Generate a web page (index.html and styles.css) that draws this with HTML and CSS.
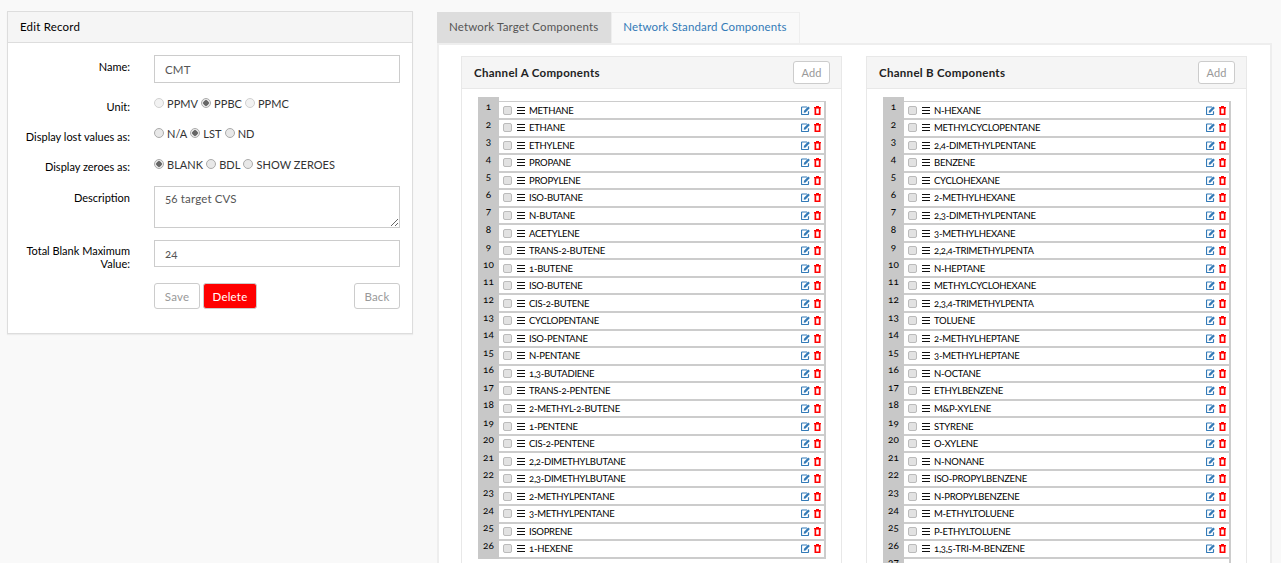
FILE: index.html
```html
<!DOCTYPE html>
<html lang="en">
<head>
  <meta charset="UTF-8">
  <title>Edit Record</title>
  <link rel="stylesheet" href="styles.css">
</head>
<body>
  <svg class="sprite">
    <symbol id="i-edit" viewBox="0 0 9 9">
      <path d="M6 1H1.2C.8 1 .5 1.3.5 1.7v6.1c0 .4.3.7.7.7h5.6c.4 0 .7-.3.7-.7V5.2" fill="none" stroke="#337ab7" stroke-width="1.2"/>
      <path d="M3 4.8 7.2.5 8.9 2 4.6 6.4 2.7 6.8z" fill="#337ab7"/>
    </symbol>
    <symbol id="i-del" viewBox="0 0 7 9">
      <path d="M2 1V0h3v1h2v1.2h-.5V9H.5V2.2H0V1z" fill="#f00"/>
      <path d="M2.2 2.6h2.6v4.9H2.2z" fill="#fff"/>
    </symbol>
  </svg>

  <div class="left-col">
    <div class="panel">
      <div class="panel-heading">Edit Record</div>
      <div class="panel-body">
        <div class="form-row row-name">
          <label class="form-label">Name:</label>
          <input class="form-input input-name" type="text" value="CMT">
        </div>
        <div class="form-row row-radio row-unit">
          <label class="form-label">Unit:</label>
          <div class="radio-group">
            <input type="radio" class="radio faded" disabled><span>PPMV</span>
            <input type="radio" class="radio" checked disabled><span>PPBC</span>
            <input type="radio" class="radio faded" disabled><span>PPMC</span>
          </div>
        </div>
        <div class="form-row row-radio row-lost">
          <label class="form-label">Display lost values as:</label>
          <div class="radio-group">
            <input type="radio" class="radio" disabled><span>N/A</span>
            <input type="radio" class="radio" checked disabled><span>LST</span>
            <input type="radio" class="radio" disabled><span>ND</span>
          </div>
        </div>
        <div class="form-row row-radio row-zero">
          <label class="form-label">Display zeroes as:</label>
          <div class="radio-group">
            <input type="radio" class="radio" checked disabled><span>BLANK</span>
            <input type="radio" class="radio" disabled><span>BDL</span>
            <input type="radio" class="radio" disabled><span>SHOW ZEROES</span>
          </div>
        </div>
        <div class="form-row row-desc">
          <label class="form-label">Description</label>
          <textarea class="form-input input-desc">56 target CVS</textarea>
        </div>
        <div class="form-row row-total">
          <label class="form-label">Total Blank Maximum Value:</label>
          <input class="form-input input-total" type="text" value="24">
        </div>
        <div class="form-row row-buttons">
          <span></span>
          <div class="buttons">
            <button class="btn">Save</button>
            <button class="btn btn-delete">Delete</button>
            <button class="btn btn-back">Back</button>
          </div>
        </div>
      </div>
    </div>
  </div>

  <div class="right-col">
    <div class="tabs">
      <div class="tab active">Network Target Components</div>
      <div class="tab">Network Standard Components</div>
    </div>
    <div class="tab-content">
      <div class="channel">
        <div class="channel-heading">
          <span>Channel A Components</span>
          <button class="btn btn-add">Add</button>
        </div>
        <div class="channel-body">
          <ol class="nums">
            <li>1</li><li>2</li><li>3</li><li>4</li><li>5</li><li>6</li><li>7</li><li>8</li><li>9</li><li>10</li><li>11</li><li>12</li><li>13</li><li>14</li><li>15</li><li>16</li><li>17</li><li>18</li><li>19</li><li>20</li><li>21</li><li>22</li><li>23</li><li>24</li><li>25</li><li>26</li>
          </ol>
          <ul class="rows">
            <li class="item"><i class="check"></i><i class="bars"></i><span class="name">METHANE</span><svg class="ic-edit"><use href="#i-edit"/></svg><svg class="ic-del"><use href="#i-del"/></svg></li>
            <li class="item"><i class="check"></i><i class="bars"></i><span class="name">ETHANE</span><svg class="ic-edit"><use href="#i-edit"/></svg><svg class="ic-del"><use href="#i-del"/></svg></li>
            <li class="item"><i class="check"></i><i class="bars"></i><span class="name">ETHYLENE</span><svg class="ic-edit"><use href="#i-edit"/></svg><svg class="ic-del"><use href="#i-del"/></svg></li>
            <li class="item"><i class="check"></i><i class="bars"></i><span class="name">PROPANE</span><svg class="ic-edit"><use href="#i-edit"/></svg><svg class="ic-del"><use href="#i-del"/></svg></li>
            <li class="item"><i class="check"></i><i class="bars"></i><span class="name">PROPYLENE</span><svg class="ic-edit"><use href="#i-edit"/></svg><svg class="ic-del"><use href="#i-del"/></svg></li>
            <li class="item"><i class="check"></i><i class="bars"></i><span class="name">ISO-BUTANE</span><svg class="ic-edit"><use href="#i-edit"/></svg><svg class="ic-del"><use href="#i-del"/></svg></li>
            <li class="item"><i class="check"></i><i class="bars"></i><span class="name">N-BUTANE</span><svg class="ic-edit"><use href="#i-edit"/></svg><svg class="ic-del"><use href="#i-del"/></svg></li>
            <li class="item"><i class="check"></i><i class="bars"></i><span class="name">ACETYLENE</span><svg class="ic-edit"><use href="#i-edit"/></svg><svg class="ic-del"><use href="#i-del"/></svg></li>
            <li class="item"><i class="check"></i><i class="bars"></i><span class="name">TRANS-2-BUTENE</span><svg class="ic-edit"><use href="#i-edit"/></svg><svg class="ic-del"><use href="#i-del"/></svg></li>
            <li class="item"><i class="check"></i><i class="bars"></i><span class="name">1-BUTENE</span><svg class="ic-edit"><use href="#i-edit"/></svg><svg class="ic-del"><use href="#i-del"/></svg></li>
            <li class="item"><i class="check"></i><i class="bars"></i><span class="name">ISO-BUTENE</span><svg class="ic-edit"><use href="#i-edit"/></svg><svg class="ic-del"><use href="#i-del"/></svg></li>
            <li class="item"><i class="check"></i><i class="bars"></i><span class="name">CIS-2-BUTENE</span><svg class="ic-edit"><use href="#i-edit"/></svg><svg class="ic-del"><use href="#i-del"/></svg></li>
            <li class="item"><i class="check"></i><i class="bars"></i><span class="name">CYCLOPENTANE</span><svg class="ic-edit"><use href="#i-edit"/></svg><svg class="ic-del"><use href="#i-del"/></svg></li>
            <li class="item"><i class="check"></i><i class="bars"></i><span class="name">ISO-PENTANE</span><svg class="ic-edit"><use href="#i-edit"/></svg><svg class="ic-del"><use href="#i-del"/></svg></li>
            <li class="item"><i class="check"></i><i class="bars"></i><span class="name">N-PENTANE</span><svg class="ic-edit"><use href="#i-edit"/></svg><svg class="ic-del"><use href="#i-del"/></svg></li>
            <li class="item"><i class="check"></i><i class="bars"></i><span class="name">1,3-BUTADIENE</span><svg class="ic-edit"><use href="#i-edit"/></svg><svg class="ic-del"><use href="#i-del"/></svg></li>
            <li class="item"><i class="check"></i><i class="bars"></i><span class="name">TRANS-2-PENTENE</span><svg class="ic-edit"><use href="#i-edit"/></svg><svg class="ic-del"><use href="#i-del"/></svg></li>
            <li class="item"><i class="check"></i><i class="bars"></i><span class="name">2-METHYL-2-BUTENE</span><svg class="ic-edit"><use href="#i-edit"/></svg><svg class="ic-del"><use href="#i-del"/></svg></li>
            <li class="item"><i class="check"></i><i class="bars"></i><span class="name">1-PENTENE</span><svg class="ic-edit"><use href="#i-edit"/></svg><svg class="ic-del"><use href="#i-del"/></svg></li>
            <li class="item"><i class="check"></i><i class="bars"></i><span class="name">CIS-2-PENTENE</span><svg class="ic-edit"><use href="#i-edit"/></svg><svg class="ic-del"><use href="#i-del"/></svg></li>
            <li class="item"><i class="check"></i><i class="bars"></i><span class="name">2,2-DIMETHYLBUTANE</span><svg class="ic-edit"><use href="#i-edit"/></svg><svg class="ic-del"><use href="#i-del"/></svg></li>
            <li class="item"><i class="check"></i><i class="bars"></i><span class="name">2,3-DIMETHYLBUTANE</span><svg class="ic-edit"><use href="#i-edit"/></svg><svg class="ic-del"><use href="#i-del"/></svg></li>
            <li class="item"><i class="check"></i><i class="bars"></i><span class="name">2-METHYLPENTANE</span><svg class="ic-edit"><use href="#i-edit"/></svg><svg class="ic-del"><use href="#i-del"/></svg></li>
            <li class="item"><i class="check"></i><i class="bars"></i><span class="name">3-METHYLPENTANE</span><svg class="ic-edit"><use href="#i-edit"/></svg><svg class="ic-del"><use href="#i-del"/></svg></li>
            <li class="item"><i class="check"></i><i class="bars"></i><span class="name">ISOPRENE</span><svg class="ic-edit"><use href="#i-edit"/></svg><svg class="ic-del"><use href="#i-del"/></svg></li>
            <li class="item"><i class="check"></i><i class="bars"></i><span class="name">1-HEXENE</span><svg class="ic-edit"><use href="#i-edit"/></svg><svg class="ic-del"><use href="#i-del"/></svg></li>
          </ul>
        </div>
      </div>

      <div class="channel">
        <div class="channel-heading">
          <span>Channel B Components</span>
          <button class="btn btn-add">Add</button>
        </div>
        <div class="channel-body">
          <ol class="nums">
            <li>1</li><li>2</li><li>3</li><li>4</li><li>5</li><li>6</li><li>7</li><li>8</li><li>9</li><li>10</li><li>11</li><li>12</li><li>13</li><li>14</li><li>15</li><li>16</li><li>17</li><li>18</li><li>19</li><li>20</li><li>21</li><li>22</li><li>23</li><li>24</li><li>25</li><li>26</li><li>27</li>
          </ol>
          <ul class="rows">
            <li class="item"><i class="check"></i><i class="bars"></i><span class="name">N-HEXANE</span><svg class="ic-edit"><use href="#i-edit"/></svg><svg class="ic-del"><use href="#i-del"/></svg></li>
            <li class="item"><i class="check"></i><i class="bars"></i><span class="name">METHYLCYCLOPENTANE</span><svg class="ic-edit"><use href="#i-edit"/></svg><svg class="ic-del"><use href="#i-del"/></svg></li>
            <li class="item"><i class="check"></i><i class="bars"></i><span class="name">2,4-DIMETHYLPENTANE</span><svg class="ic-edit"><use href="#i-edit"/></svg><svg class="ic-del"><use href="#i-del"/></svg></li>
            <li class="item"><i class="check"></i><i class="bars"></i><span class="name">BENZENE</span><svg class="ic-edit"><use href="#i-edit"/></svg><svg class="ic-del"><use href="#i-del"/></svg></li>
            <li class="item"><i class="check"></i><i class="bars"></i><span class="name">CYCLOHEXANE</span><svg class="ic-edit"><use href="#i-edit"/></svg><svg class="ic-del"><use href="#i-del"/></svg></li>
            <li class="item"><i class="check"></i><i class="bars"></i><span class="name">2-METHYLHEXANE</span><svg class="ic-edit"><use href="#i-edit"/></svg><svg class="ic-del"><use href="#i-del"/></svg></li>
            <li class="item"><i class="check"></i><i class="bars"></i><span class="name">2,3-DIMETHYLPENTANE</span><svg class="ic-edit"><use href="#i-edit"/></svg><svg class="ic-del"><use href="#i-del"/></svg></li>
            <li class="item"><i class="check"></i><i class="bars"></i><span class="name">3-METHYLHEXANE</span><svg class="ic-edit"><use href="#i-edit"/></svg><svg class="ic-del"><use href="#i-del"/></svg></li>
            <li class="item"><i class="check"></i><i class="bars"></i><span class="name">2,2,4-TRIMETHYLPENTA</span><svg class="ic-edit"><use href="#i-edit"/></svg><svg class="ic-del"><use href="#i-del"/></svg></li>
            <li class="item"><i class="check"></i><i class="bars"></i><span class="name">N-HEPTANE</span><svg class="ic-edit"><use href="#i-edit"/></svg><svg class="ic-del"><use href="#i-del"/></svg></li>
            <li class="item"><i class="check"></i><i class="bars"></i><span class="name">METHYLCYCLOHEXANE</span><svg class="ic-edit"><use href="#i-edit"/></svg><svg class="ic-del"><use href="#i-del"/></svg></li>
            <li class="item"><i class="check"></i><i class="bars"></i><span class="name">2,3,4-TRIMETHYLPENTA</span><svg class="ic-edit"><use href="#i-edit"/></svg><svg class="ic-del"><use href="#i-del"/></svg></li>
            <li class="item"><i class="check"></i><i class="bars"></i><span class="name">TOLUENE</span><svg class="ic-edit"><use href="#i-edit"/></svg><svg class="ic-del"><use href="#i-del"/></svg></li>
            <li class="item"><i class="check"></i><i class="bars"></i><span class="name">2-METHYLHEPTANE</span><svg class="ic-edit"><use href="#i-edit"/></svg><svg class="ic-del"><use href="#i-del"/></svg></li>
            <li class="item"><i class="check"></i><i class="bars"></i><span class="name">3-METHYLHEPTANE</span><svg class="ic-edit"><use href="#i-edit"/></svg><svg class="ic-del"><use href="#i-del"/></svg></li>
            <li class="item"><i class="check"></i><i class="bars"></i><span class="name">N-OCTANE</span><svg class="ic-edit"><use href="#i-edit"/></svg><svg class="ic-del"><use href="#i-del"/></svg></li>
            <li class="item"><i class="check"></i><i class="bars"></i><span class="name">ETHYLBENZENE</span><svg class="ic-edit"><use href="#i-edit"/></svg><svg class="ic-del"><use href="#i-del"/></svg></li>
            <li class="item"><i class="check"></i><i class="bars"></i><span class="name">M&amp;P-XYLENE</span><svg class="ic-edit"><use href="#i-edit"/></svg><svg class="ic-del"><use href="#i-del"/></svg></li>
            <li class="item"><i class="check"></i><i class="bars"></i><span class="name">STYRENE</span><svg class="ic-edit"><use href="#i-edit"/></svg><svg class="ic-del"><use href="#i-del"/></svg></li>
            <li class="item"><i class="check"></i><i class="bars"></i><span class="name">O-XYLENE</span><svg class="ic-edit"><use href="#i-edit"/></svg><svg class="ic-del"><use href="#i-del"/></svg></li>
            <li class="item"><i class="check"></i><i class="bars"></i><span class="name">N-NONANE</span><svg class="ic-edit"><use href="#i-edit"/></svg><svg class="ic-del"><use href="#i-del"/></svg></li>
            <li class="item"><i class="check"></i><i class="bars"></i><span class="name">ISO-PROPYLBENZENE</span><svg class="ic-edit"><use href="#i-edit"/></svg><svg class="ic-del"><use href="#i-del"/></svg></li>
            <li class="item"><i class="check"></i><i class="bars"></i><span class="name">N-PROPYLBENZENE</span><svg class="ic-edit"><use href="#i-edit"/></svg><svg class="ic-del"><use href="#i-del"/></svg></li>
            <li class="item"><i class="check"></i><i class="bars"></i><span class="name">M-ETHYLTOLUENE</span><svg class="ic-edit"><use href="#i-edit"/></svg><svg class="ic-del"><use href="#i-del"/></svg></li>
            <li class="item"><i class="check"></i><i class="bars"></i><span class="name">P-ETHYLTOLUENE</span><svg class="ic-edit"><use href="#i-edit"/></svg><svg class="ic-del"><use href="#i-del"/></svg></li>
            <li class="item"><i class="check"></i><i class="bars"></i><span class="name">1,3,5-TRI-M-BENZENE</span><svg class="ic-edit"><use href="#i-edit"/></svg><svg class="ic-del"><use href="#i-del"/></svg></li>
            <li class="item"></li>
          </ul>
        </div>
      </div>
    </div>
  </div>
</body>
</html>
```

FILE: styles.css
```css
* { margin: 0; padding: 0; box-sizing: border-box; }

html,
body { width: 100%; height: 100%; overflow: hidden; }

body {
  display: flex;
  gap: 24px;
  padding: 11px 9px 0 7px;
  background-color: #f9f9f9;
  font-family: Lato, 'Open Sans', sans-serif;
  font-size: 11px;
  font-variant-numeric: oldstyle-nums;
  color: #000;
}

.sprite { display: none; }

.left-col { width: 406px; flex-shrink: 0; }
.right-col { flex: 1; min-width: 0; }

/* left form */
.panel {
  background-color: #fff;
  border: 1px solid #ddd;
  box-shadow: 0 1px 1px rgba(0, 0, 0, 0.05);
}
.panel-heading {
  height: 31px;
  padding: 8px 12px 0;
  background-color: #f5f5f5;
  border-bottom: 1px solid #ddd;
  font-size: 11.5px;
  letter-spacing: .2px;
}
.panel-body { padding: 12px 12px 24px 0; }

.form-row {
  display: grid;
  grid-template-columns: 122px 1fr;
  column-gap: 24px;
}
.form-label { text-align: right; line-height: 13px; }

.row-name { height: 28px; margin-bottom: 13px; }
.row-name .form-label { padding-top: 5px; }
.row-unit { height: 16px; margin-bottom: 14px; }
.row-unit .form-label { padding-top: 4px; }
.row-lost { height: 16px; margin-bottom: 15px; }
.row-lost .form-label { padding-top: 4px; }
.row-zero { height: 16px; margin-bottom: 13px; }
.row-zero .form-label { padding-top: 3px; }
.row-desc { height: 42px; margin-bottom: 12px; }
.row-desc .form-label { padding-top: 5px; }
.row-total { height: 27px; margin-bottom: 16px; }
.row-total .form-label { padding-top: 4px; }

.form-input {
  display: block;
  width: 100%;
  padding: 0 10px;
  border: 1px solid #ccc;
  background-color: #fff;
  font: inherit;
  font-size: 11.5px;
  letter-spacing: .15px;
  color: #555;
  outline: none;
}
.input-name { height: 28px; }
.input-desc { height: 42px; padding-top: 5px; resize: both; }
.input-total { height: 27px; }

.radio-group {
  display: flex;
  align-items: center;
  height: 14px;
  font-size: 11px;
  letter-spacing: .05px;
  color: #333;
}
.radio-group span { margin: 0 3px; }
.radio {
  appearance: none;
  width: 10px;
  height: 10px;
  border: 1px solid #aaa;
  border-radius: 50%;
  background-color: #e8e8e8;
}
.radio:checked { background: radial-gradient(circle, #666 0 2.5px, #e8e8e8 3px); }
.radio.faded { opacity: .55; }

.buttons { display: flex; gap: 3px; }
.btn {
  width: 46px;
  height: 26px;
  padding: 0;
  border: 1px solid #ccc;
  border-radius: 3px;
  background-color: #fff;
  font: inherit;
  font-size: 11.5px;
  letter-spacing: .2px;
  color: #999;
}
.btn-delete {
  width: 54px;
  background-color: #f00;
  color: #fff;
}
.btn-back { margin-left: auto; }

/* tabs */
.tabs { display: flex; height: 32px; padding-top: 1px; }
.tab {
  padding: 7px 12px 0 11px;
  border: 1px solid #eee;
  border-bottom: 0;
  font-size: 11.5px;
  letter-spacing: .15px;
  color: #337ab7;
}
.tab.active { background-color: #ddd; border-color: #ddd; color: #555; }

.tab-content {
  display: flex;
  gap: 24px;
  height: 600px;
  padding: 11px 0 0 22px;
  background-color: #fff;
  border: 2px solid #eee;
  border-bottom: 0;
}

.channel {
  width: 381px;
  flex-shrink: 0;
  border: 1px solid #e8e8e8;
  border-bottom: 0;
}
.channel-heading {
  display: flex;
  justify-content: space-between;
  align-items: center;
  height: 32px;
  padding: 0 11px 1px 12px;
  background-color: #f5f5f5;
  border-bottom: 1px solid #e8e8e8;
  font-size: 11.5px;
  font-weight: 700;
  letter-spacing: .3px;
  color: #222;
}
.btn-add { width: 37px; height: 23px; font-weight: 400; font-size: 11px; }

.channel-body { display: flex; padding: 8px 15px 0 16px; }

.nums {
  width: 21px;
  flex-shrink: 0;
  list-style: none;
  background-color: #c8c8c8;
  font-size: 10px;
  text-align: center;
  padding-top: 2px;
}
.nums li { height: 17.56px; line-height: 14px; }

.rows {
  flex: 1;
  list-style: none;
  padding-top: 5.45px;
}
.item {
  display: flex;
  align-items: center;
  height: 17.56px;
  padding: 0 3px 0 4px;
  background-color: #fff;
  border-right: 2px solid #ccc;
  border-bottom: 2px solid #ccc;
  box-shadow: 0 -1px 0 #ccc;
  font-size: 9.5px;
  letter-spacing: -.25px;
  color: #000;
}
.check {
  width: 9px;
  height: 9px;
  border: 1px solid #bbb;
  border-radius: 2px;
  background-color: #e2e2e2;
}
.bars {
  width: 8px;
  height: 7px;
  margin: 0 4px 0 5px;
  border-top: 1px solid #111;
  border-bottom: 1px solid #111;
  background: linear-gradient(#111, #111) center / 100% 1px no-repeat;
}
.name { flex: 1; white-space: nowrap; }
.ic-edit { width: 9px; height: 9px; margin-right: 4px; }
.ic-del { width: 7px; height: 9px; }
```
